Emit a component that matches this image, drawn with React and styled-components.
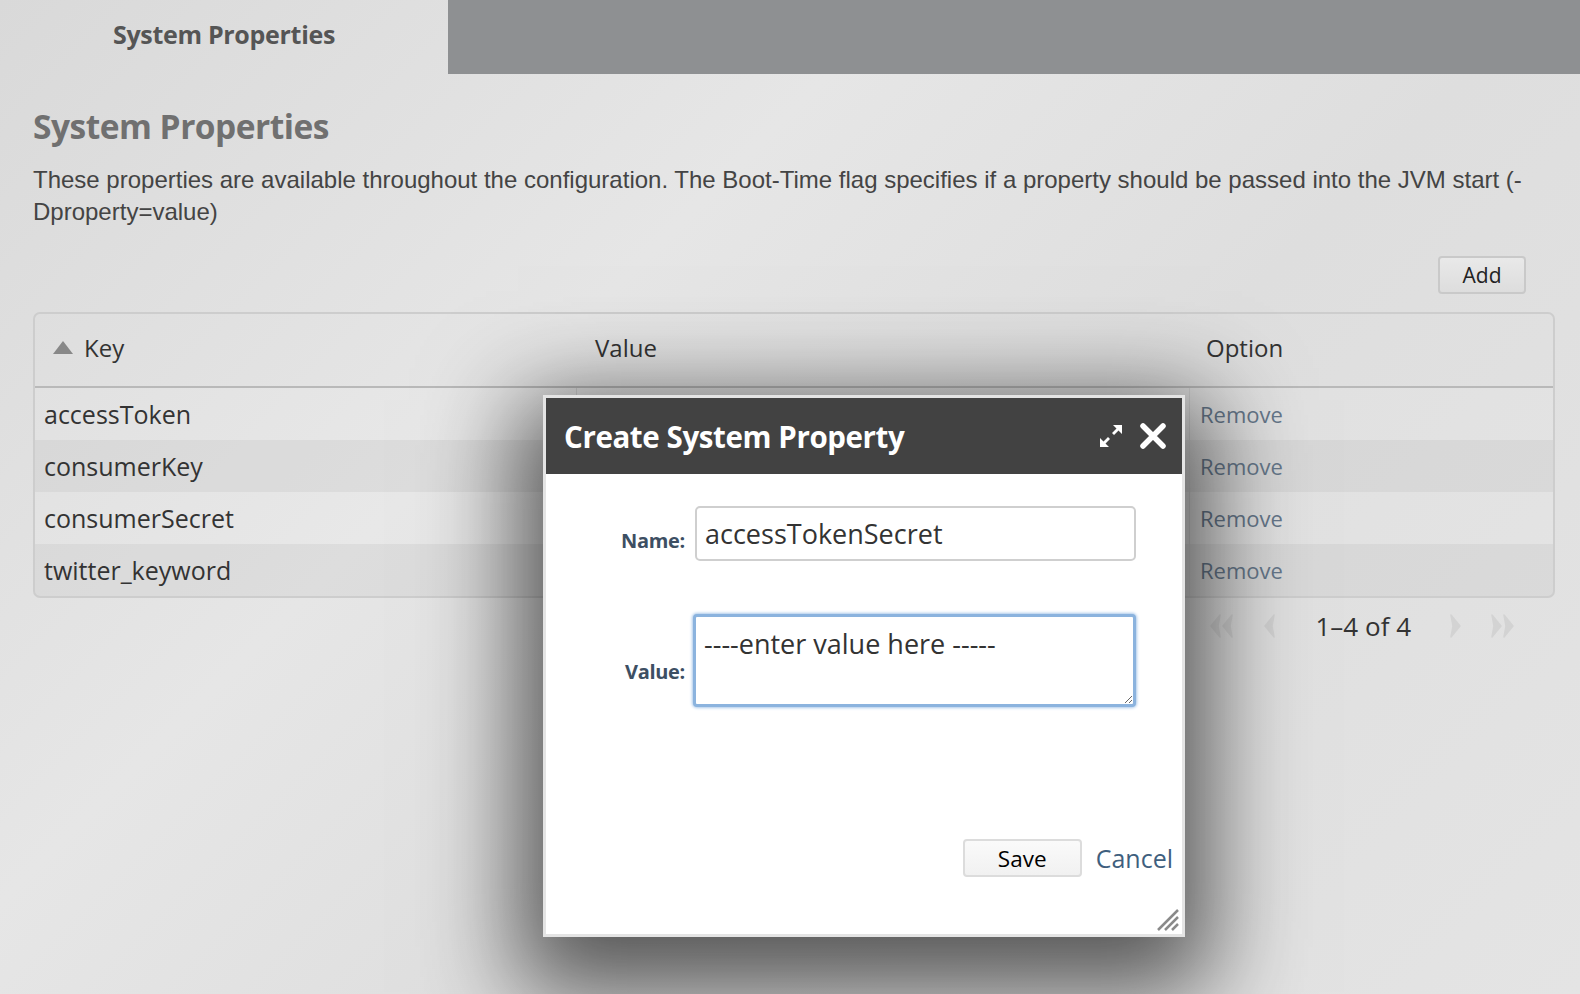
import React from 'react';
import styled, { createGlobalStyle } from 'styled-components';

const GlobalStyle = createGlobalStyle`
  body {
    margin: 0;
    background: #e0e0e0;
    font-family: "Open Sans", "Noto Sans", sans-serif;
  }
`;

const rows = ['accessToken', 'consumerKey', 'consumerSecret', 'twitter_keyword'];

function App () {
    return (
        <Page>
            <GlobalStyle />
{/* tabs */}
            <TabBar>
                <Tab>System Properties</Tab>
                <TabFill />
            </TabBar>

            <Content>
                <Heading>System Properties</Heading>
                <Description>
                    These properties are available throughout the configuration. The Boot-Time flag specifies if a property should be passed into the JVM start (-Dproperty=value)
                </Description>

                <Toolbar>
                    <Button>Add</Button>
                </Toolbar>

{/* table */}
                <Table>
                    <HeaderRow>
                        <HeadCell><SortArrow />Key</HeadCell>
                        <HeadCell>Value</HeadCell>
                        <HeadCell>Option</HeadCell>
                    </HeaderRow>
                    { rows.map((item, i) => (
                        <Row key={item} odd={i % 2 === 1}>
                            <Cell>{item}</Cell>
                            <Cell divider />
                            <Cell divider><RemoveLink>Remove</RemoveLink></Cell>
                        </Row>
                    )) }
                </Table>

                <Pager>
                    <PagerIcon dir="first" />
                    <PagerIcon dir="prev" />
                    <PageText>1–4 of 4</PageText>
                    <PagerIcon dir="next" />
                    <PagerIcon dir="last" />
                </Pager>
            </Content>

{/* dialog */}
            <Dialog>
                <DialogTitle>
                    <span>Create System Property</span>
                    <TitleIcons>
                        <svg width="26" height="26" viewBox="0 0 26 26">
                            <polygon points="24,2 24,11 20.5,7.5 16,12 14,10 18.5,5.5 15,2" fill="#fff" />
                            <polygon points="2,24 2,15 5.5,18.5 10,14 12,16 7.5,20.5 11,24" fill="#fff" />
                        </svg>
                        <svg width="28" height="28" viewBox="0 0 28 28">
                            <path d="M4 4 L24 24 M24 4 L4 24" stroke="#fff" strokeWidth="5.5" strokeLinecap="round" />
                        </svg>
                    </TitleIcons>
                </DialogTitle>

                <Form>
                    <Label>Name:</Label>
                    <TextInput defaultValue="accessTokenSecret" />
                    <Label tall>Value:</Label>
                    <TextArea defaultValue="----enter value here -----" />
                </Form>

                <Actions>
                    <Button save>Save</Button>
                    <CancelLink>Cancel</CancelLink>
                </Actions>

                <Grip width="26" height="26" viewBox="0 0 26 26">
                    <path d="M4 24 L24 4 M11 24 L24 11 M18 24 L24 18" stroke="#8a8a8a" strokeWidth="2.5" />
                </Grip>
            </Dialog>
        </Page>
    );
}

function PagerIcon ({ dir }) {
    const double = dir === 'first' || dir === 'last';
    const left = dir === 'first' || dir === 'prev';
    const chevron = (x) => left
        ? `M${x + 11} 3 L${x + 2} 14 L${x + 11} 25 L${x + 9} 14 Z`
        : `M${x + 1} 3 L${x + 10} 14 L${x + 1} 25 L${x + 3} 14 Z`;
    return (
        <svg width={double ? 26 : 13} height="28" viewBox={`0 0 ${double ? 26 : 13} 28`}>
            <path d={chevron(0)} fill="#d3d3d3" stroke="#d3d3d3" strokeWidth="1.5" strokeLinejoin="round" />
            { double && <path d={chevron(12)} fill="#d3d3d3" stroke="#d3d3d3" strokeWidth="1.5" strokeLinejoin="round" /> }
        </svg>
    );
}

const Page = styled.div`
    position: relative;
    min-height: 994px;
    background: linear-gradient(135deg, #d9d9d9 0%, #e6e6e6 35%, #dedede 60%, #e4e4e4 100%);
    overflow: hidden;
`;

const TabBar = styled.div`
    display: flex;
    height: 74px;
`;

const Tab = styled.div`
    width: 448px;
    display: flex;
    align-items: center;
    justify-content: center;
    padding-bottom: 6px;
    box-sizing: border-box;
    font-size: 25px;
    font-weight: bold;
    color: #555;
    letter-spacing: -0.3px;
`;

const TabFill = styled.div`
    flex: 1;
    background: #8e9092;
`;

const Content = styled.div`
    padding: 0 25px 0 33px;
`;

const Heading = styled.h1`
    margin: 32px 0 0;
    font-size: 33.5px;
    line-height: 40px;
    font-weight: bold;
    color: #707070;
    letter-spacing: -0.5px;
`;

const Description = styled.p`
    margin: 18px 0 0;
    font-family: "Liberation Sans", Arial, sans-serif;
    font-size: 24px;
    line-height: 32px;
    color: #444;
    padding-right: 20px;
`;

const Toolbar = styled.div`
    display: flex;
    justify-content: flex-end;
    margin-top: 28px;
    padding-right: 29px;
`;

const Button = styled.button`
    font-family: "Open Sans", sans-serif;
    font-size: ${p => p.save ? '22.5px' : '21px'};
    color: ${p => p.save ? '#000' : '#222'};
    width: ${p => p.save ? '119px' : '88px'};
    height: 38px;
    border: 2px solid ${p => p.save ? '#dcdcdc' : '#c9c9c9'};
    border-radius: 4px;
    background: ${p => p.save ? 'linear-gradient(#fafafa, #f1f1f1)' : 'linear-gradient(#e9e9e9, #dddddd)'};
    padding: 0;
`;

const Table = styled.div`
    margin-top: 18px;
    border: 2px solid #cdcdcd;
    border-radius: 7px;
    overflow: hidden;
`;

const columns = `
    display: grid;
    grid-template-columns: 541px 613px 1fr;
`;

const HeaderRow = styled.div`
    ${columns}
    height: 74px;
    border-bottom: 2px solid #b9b9b9;
    padding-bottom: 5px;
    box-sizing: border-box;
`;

const HeadCell = styled.div`
    display: flex;
    align-items: center;
    padding-left: 16px;
    font-size: 24px;
    color: #333;

    &:nth-child(2) { padding-left: 19px; }
    &:nth-child(3) { padding-left: 17px; }
`;

const SortArrow = styled.span`
    width: 0;
    height: 0;
    border-left: 10px solid transparent;
    border-right: 10px solid transparent;
    border-bottom: 13px solid #888;
    margin-right: 11px;
    margin-left: 2px;
`;

const Row = styled.div`
    ${columns}
    height: 52px;
    background: ${p => p.odd ? 'rgba(0,0,0,0.035)' : 'rgba(255,255,255,0.08)'};
`;

const Cell = styled.div`
    display: flex;
    align-items: center;
    padding-left: ${p => p.divider ? '10px' : '9px'};
    font-size: 25px;
    color: #333;
    border-left: ${p => p.divider ? '1px solid #d2d2d2' : 'none'};
`;

const RemoveLink = styled.span`
    color: #66778a;
    font-size: 22px;
`;

const Pager = styled.div`
    display: flex;
    align-items: center;
    justify-content: flex-end;
    height: 56px;
    padding: 0 24px 0 0;
    box-sizing: border-box;

    svg { margin: 0 14px; }
`;

const PageText = styled.span`
    font-size: 26px;
    color: #333;
    margin: 0 25px 0 26px;
`;

const Dialog = styled.div`
    position: absolute;
    left: 543px;
    top: 395px;
    width: 642px;
    height: 542px;
    box-sizing: border-box;
    border: 3px solid #e4e4e4;
    background: #fff;
    box-shadow: 0 30px 90px 25px rgba(0, 0, 0, 0.62);
    display: flex;
    flex-direction: column;
`;

const DialogTitle = styled.div`
    height: 76px;
    background: #424242;
    display: flex;
    align-items: center;
    justify-content: space-between;
    padding: 0 15px 0 18px;
    color: #fff;
    font-size: 29.5px;
    font-weight: bold;
    letter-spacing: -0.4px;
`;

const TitleIcons = styled.div`
    display: flex;
    align-items: center;
    gap: 15px;
`;

const Form = styled.div`
    display: grid;
    grid-template-columns: 139px 441px;
    column-gap: 10px;
    row-gap: 53px;
    margin-top: 32px;
`;

const Label = styled.label`
    display: flex;
    align-items: flex-end;
    justify-content: flex-end;
    padding-bottom: ${p => p.tall ? '22px' : '7px'};
    font-size: 20px;
    font-weight: bold;
    color: #3d4f63;
    letter-spacing: -0.3px;
`;

const TextInput = styled.input`
    height: 55px;
    box-sizing: border-box;
    border: 2px solid #cfcfcf;
    border-radius: 5px;
    padding: 0 8px;
    font-family: "Open Sans", sans-serif;
    font-size: 27px;
    color: #333;
    outline: none;
`;

const TextArea = styled.textarea`
    height: 93px;
    box-sizing: border-box;
    margin-left: -2px;
    border: 3px solid #8bb3de;
    border-radius: 4px;
    box-shadow: 0 0 3px 1px #a9c8ea;
    padding: 10px 8px 6px;
    font-family: "Open Sans", sans-serif;
    font-size: 27px;
    line-height: 34px;
    color: #333;
    outline: none;
    resize: vertical;
`;

const Actions = styled.div`
    display: flex;
    align-items: center;
    justify-content: flex-end;
    gap: 14px;
    margin-top: auto;
    margin-bottom: 57px;
    padding-right: 9px;
`;

const CancelLink = styled.span`
    font-size: 25px;
    color: #3f5f7e;
`;

const Grip = styled.svg`
    position: absolute;
    right: 2px;
    bottom: 2px;
`;

export default App
